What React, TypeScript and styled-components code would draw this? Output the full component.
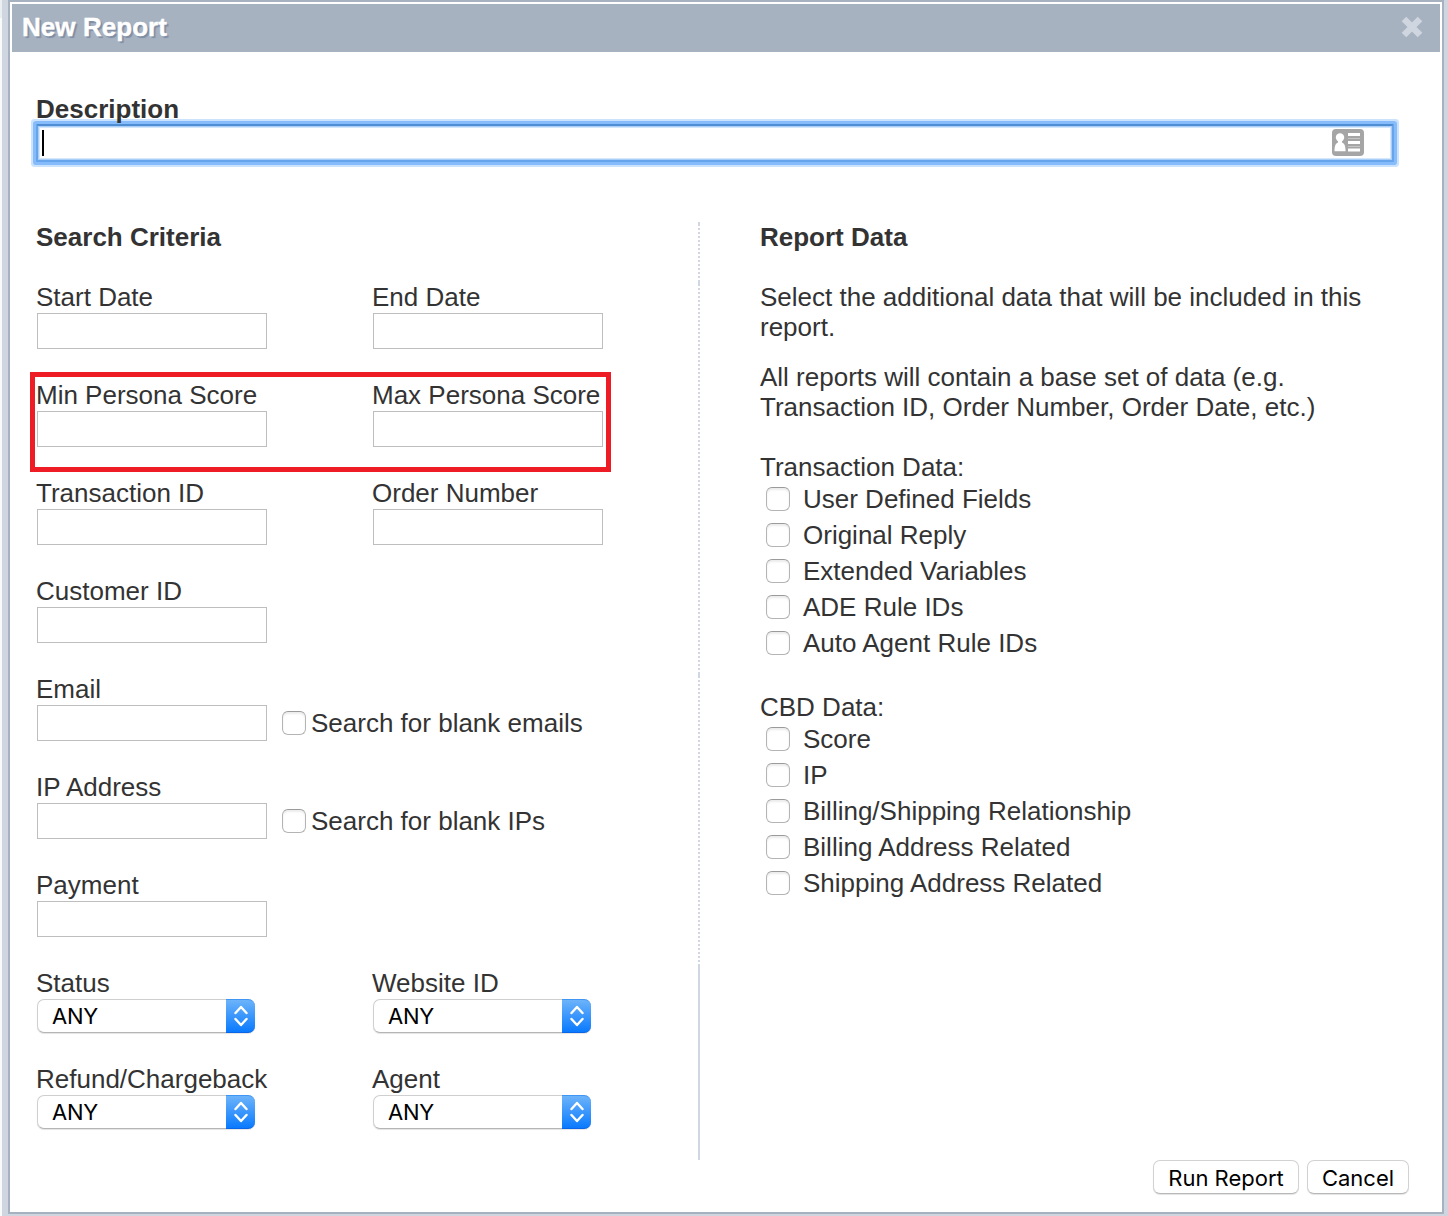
import styled, { createGlobalStyle } from 'styled-components';

const GlobalStyle = createGlobalStyle`
    *, *::before, *::after {
        box-sizing: border-box;
    }

    body {
        margin: 0;
        background: #d0d6e0;
        color: #333;
        font-family: 'Liberation Sans', Arial, sans-serif;
        font-size: 26px;
        line-height: 30px;
    }
`;

const Page = styled.div`
    width: 1448px;
    height: 1216px;
    padding: 0 4px 2px 8px;
    background:
        linear-gradient(#eaeff1 18px, #f9fafa 18px) 0 0 / 2px 100% no-repeat,
        #d0d6e0;
    overflow: hidden;
`;

const Dialog = styled.div`
    display: flex;
    flex-direction: column;
    height: 1214px;
    padding: 2px;
    border: 2px solid #a7b2c1;
    background: #fff;
`;

const Header = styled.header`
    display: flex;
    align-items: center;
    justify-content: space-between;
    flex-shrink: 0;
    height: 48px;
    padding: 0 17px 2px 10px;
    background: #a7b2c1;
`;

const Title = styled.h1`
    margin: 0;
    color: #fff;
    font-size: 26px;
    font-weight: 700;
    letter-spacing: 0.05px;
    text-shadow: 2px 2px 1px #7f8da3;
    -webkit-text-stroke: 0.4px #fff;
`;

const CloseButton = styled.button`
    display: flex;
    padding: 0;
    border: 0;
    background: none;
`;

const Body = styled.div`
    display: flex;
    flex-direction: column;
    padding: 42px 31px 0 24px;
`;

/* Sits above the focus ring so that descenders are not cut */
const Heading = styled.h2`
    position: relative;
    z-index: 1;
    margin: 0;
    font-size: 26px;
    font-weight: 700;
    line-height: 30px;
`;

const DescriptionBox = styled.div`
    display: flex;
    align-items: center;
    justify-content: space-between;
    width: 1358px;
    height: 38px;
    padding: 0 28px 0 4px;
    border: 2px solid #66a5ec;
    border-top-color: #4f8ed2;
    border-radius: 1px;
    box-shadow: 0 0 0 3px #86bcfb, 0 0 0 5px #cce3fd, inset 0 0 0 1px #a9cff9, inset 0 0 0 2px #d5e7fb;

    svg {
        margin-bottom: 2px;
    }
`;

const Caret = styled.span`
    width: 2px;
    height: 26px;
    background: #000;
`;

const Columns = styled.div`
    display: flex;
    margin-top: 60px;
`;

const Criteria = styled.section`
    flex-shrink: 0;
    width: 662px;
`;

/* Dotted down to the select rows, solid beside them */
const Divider = styled.div`
    display: flex;
    flex-direction: column;
    flex-shrink: 0;
    width: 2px;
    height: 938px;
    background:
        linear-gradient(#d0d6e2, #d0d6e2) 0 0 / 2px 4px no-repeat,
        linear-gradient(#d0d6e2, #d0d6e2) 0 58px / 2px 6px no-repeat,
        linear-gradient(#d0d6e2, #d0d6e2) 0 450px / 2px 6px no-repeat,
        repeating-linear-gradient(transparent 0 2px, #d0d6e2 2px 4px);

    &::after {
        content: '';
        height: 196px;
        margin-top: auto;
        background: #d0d6e2;
    }
`;

const ReportData = styled.section`
    flex-shrink: 0;
    width: 680px;
    padding-left: 60px;
`;

const Fields = styled.div`
    margin-top: 30px;
`;

const Row = styled.div<{ $height?: number; $highlighted?: boolean }>`
    position: relative;
    display: grid;
    grid-template-columns: 336px 1fr;
    height: ${props => props.$height || 98}px;

    &::after {
        content: '';
        display: ${props => (props.$highlighted ? 'block' : 'none')};
        position: absolute;
        top: -8px;
        left: -6px;
        width: 581px;
        height: 100px;
        border: 5px solid #ee1c25;
    }
`;

const Field = styled.label`
    display: flex;
    flex-direction: column;
    white-space: nowrap;
`;

const ControlLine = styled.span`
    display: flex;
    align-items: center;
    margin: 1px 0 0 1px;
`;

const Input = styled.input`
    width: 230px;
    height: 36px;
    padding: 0 6px;
    border: 1px solid #bebebe;
    background: #fff;
    font: inherit;
`;

const Checkbox = styled.input.attrs({ type: 'checkbox' })`
    appearance: none;
    flex-shrink: 0;
    width: 24px;
    height: 24px;
    margin: 0;
    border: 1px solid #b4b4b4;
    border-top-color: #9b9b9b;
    border-radius: 6px;
    background: #fff;
    box-shadow: inset 0 2px 2px #ececec;
`;

const BlankOption = styled.span`
    display: flex;
    align-items: center;
    gap: 5px;
    margin-left: 15px;
`;

const SelectBox = styled.span`
    display: flex;
    align-items: center;
    justify-content: space-between;
    width: 218px;
    height: 34px;
    padding-left: 14px;
    border: 1px solid #cfcfcf;
    border-right: 0;
    border-bottom-color: #b5b5b5;
    border-radius: 7px;
    background: #fff;
    box-shadow: 0 1px 1px #e4e4e4;
    color: #000;
    font-family: Inter, sans-serif;
    font-size: 22px;
    letter-spacing: -0.3px;
`;

const Stepper = styled.span`
    display: flex;
    align-items: center;
    justify-content: center;
    width: 29px;
    height: 34px;
    border: 1px solid #3f97f3;
    border-width: 1px 0;
    border-bottom-color: #0a66e8;
    border-radius: 0 7px 7px 0;
    background: linear-gradient(#6cb3fa, #0a7aff);
`;

const Paragraph = styled.p`
    margin: 0 0 20px;
`;

const CheckGroup = styled.div`
    margin-top: 30px;
`;

const CheckList = styled.div`
    padding: 2px 0 0 6px;
    margin-bottom: 34px;
`;

const CheckItem = styled.label`
    display: flex;
    gap: 13px;
    height: 30px;
    margin-bottom: 6px;
    align-items: center;
    white-space: nowrap;
`;

const Actions = styled.footer`
    display: flex;
    justify-content: flex-end;
    gap: 8px;
`;

const Button = styled.button<{ $width: number }>`
    width: ${props => props.$width}px;
    height: 34px;
    padding: 2px 0 0;
    border: 1px solid #d2d2d2;
    border-bottom-color: #b7b7b7;
    border-radius: 7px;
    background: #fff;
    box-shadow: 0 1px 1px #e4e4e4;
    color: #000;
    font-family: Inter, sans-serif;
    font-size: 22px;
    line-height: 30px;
    white-space: nowrap;
`;

const fieldRows = [
    { labels: ['Start Date', 'End Date'] },
    { labels: ['Min Persona Score', 'Max Persona Score'], highlighted: true },
    { labels: ['Transaction ID', 'Order Number'] },
    { labels: ['Customer ID'] },
    { labels: ['Email'], blank: 'Search for blank emails' },
    { labels: ['IP Address'], blank: 'Search for blank IPs' },
    { labels: ['Payment'] },
];

const selectRows = [
    ['Status', 'Website ID'],
    ['Refund/Chargeback', 'Agent'],
];

const checkGroups = [
    {
        title: 'Transaction Data:',
        items: ['User Defined Fields', 'Original Reply', 'Extended Variables', 'ADE Rule IDs', 'Auto Agent Rule IDs'],
    },
    {
        title: 'CBD Data:',
        items: ['Score', 'IP', 'Billing/Shipping Relationship', 'Billing Address Related', 'Shipping Address Related'],
    },
];

function ContactCardIcon() {
    return (
        <svg width="32" height="27" viewBox="0 0 32 27">
            <rect width="32" height="27" rx="4" fill="#a5a5a5" />
            <circle cx="8" cy="8.5" r="4.2" fill="#fff" />
            <path d="M6 11h4v2.5c2.5 1 3.6 3.500 3.600 8.800H2.500c0-5.300 1-7.800 3.500-8.800z" fill="#fff" />
            <path d="M16 5.500h12M16 13.500h12M16 21h12" stroke="#fff" strokeWidth="3" />
            <path d="M16 9.500h12M16 17.500h12" stroke="#c4c4c4" strokeWidth="1" />
        </svg>
    );
}

function Select({ value }: { value: string }) {
    return (
        <SelectBox>
            {value}
            <Stepper>
                <svg width="14" height="22" viewBox="0 0 14 22" fill="none" stroke="#fff" strokeWidth="2.4" strokeLinecap="round" strokeLinejoin="round">
                    <path d="M1.500 8L7 2l5.500 6M1.500 14L7 20l5.500-6" />
                </svg>
            </Stepper>
        </SelectBox>
    );
}

function App() {
    return (
        <Page>
            <GlobalStyle />
            <Dialog>
                <Header>
                    <Title>New Report</Title>
                    <CloseButton aria-label="Close">
                        <svg width="22" height="22" viewBox="0 0 22 22">
                            <path d="M3 3l16 16M19 3L3 19" stroke="#d0d6e0" strokeWidth="6.5" />
                        </svg>
                    </CloseButton>
                </Header>
                <Body>
                    <Heading>Description</Heading>
                    <DescriptionBox>
                        <Caret />
                        <ContactCardIcon />
                    </DescriptionBox>
                    <Columns>
                        <Criteria>
                            <Heading>Search Criteria</Heading>
                            <Fields>
                                {fieldRows.map((row) => (
                                    <Row key={row.labels[0]} $highlighted={row.highlighted}>
                                        {row.labels.map((label) => (
                                            <Field key={label}>
                                                {label}
                                                <ControlLine>
                                                    <Input />
                                                    {row.blank && (
                                                        <BlankOption>
                                                            <Checkbox />
                                                            {row.blank}
                                                        </BlankOption>
                                                    )}
                                                </ControlLine>
                                            </Field>
                                        ))}
                                    </Row>
                                ))}
                                {selectRows.map((labels) => (
                                    <Row key={labels[0]} $height={96}>
                                        {labels.map((label) => (
                                            <Field key={label}>
                                                {label}
                                                <ControlLine>
                                                    <Select value="ANY" />
                                                </ControlLine>
                                            </Field>
                                        ))}
                                    </Row>
                                ))}
                            </Fields>
                        </Criteria>
                        <Divider />
                        <ReportData>
                            <Heading>Report Data</Heading>
                            <Fields>
                                <Paragraph>Select the additional data that will be included in this report.</Paragraph>
                                <Paragraph>All reports will contain a base set of data (e.g.<br />Transaction ID, Order Number, Order Date, etc.)</Paragraph>
                            </Fields>
                            <CheckGroup>
                                {checkGroups.map((group) => (
                                    <div key={group.title}>
                                        {group.title}
                                        <CheckList>
                                            {group.items.map((item) => (
                                                <CheckItem key={item}>
                                                    <Checkbox />
                                                    {item}
                                                </CheckItem>
                                            ))}
                                        </CheckList>
                                    </div>
                                ))}
                            </CheckGroup>
                        </ReportData>
                    </Columns>
                    <Actions>
                        <Button $width={146}>Run Report</Button>
                        <Button $width={102}>Cancel</Button>
                    </Actions>
                </Body>
            </Dialog>
        </Page>
    );
}

export default App;
